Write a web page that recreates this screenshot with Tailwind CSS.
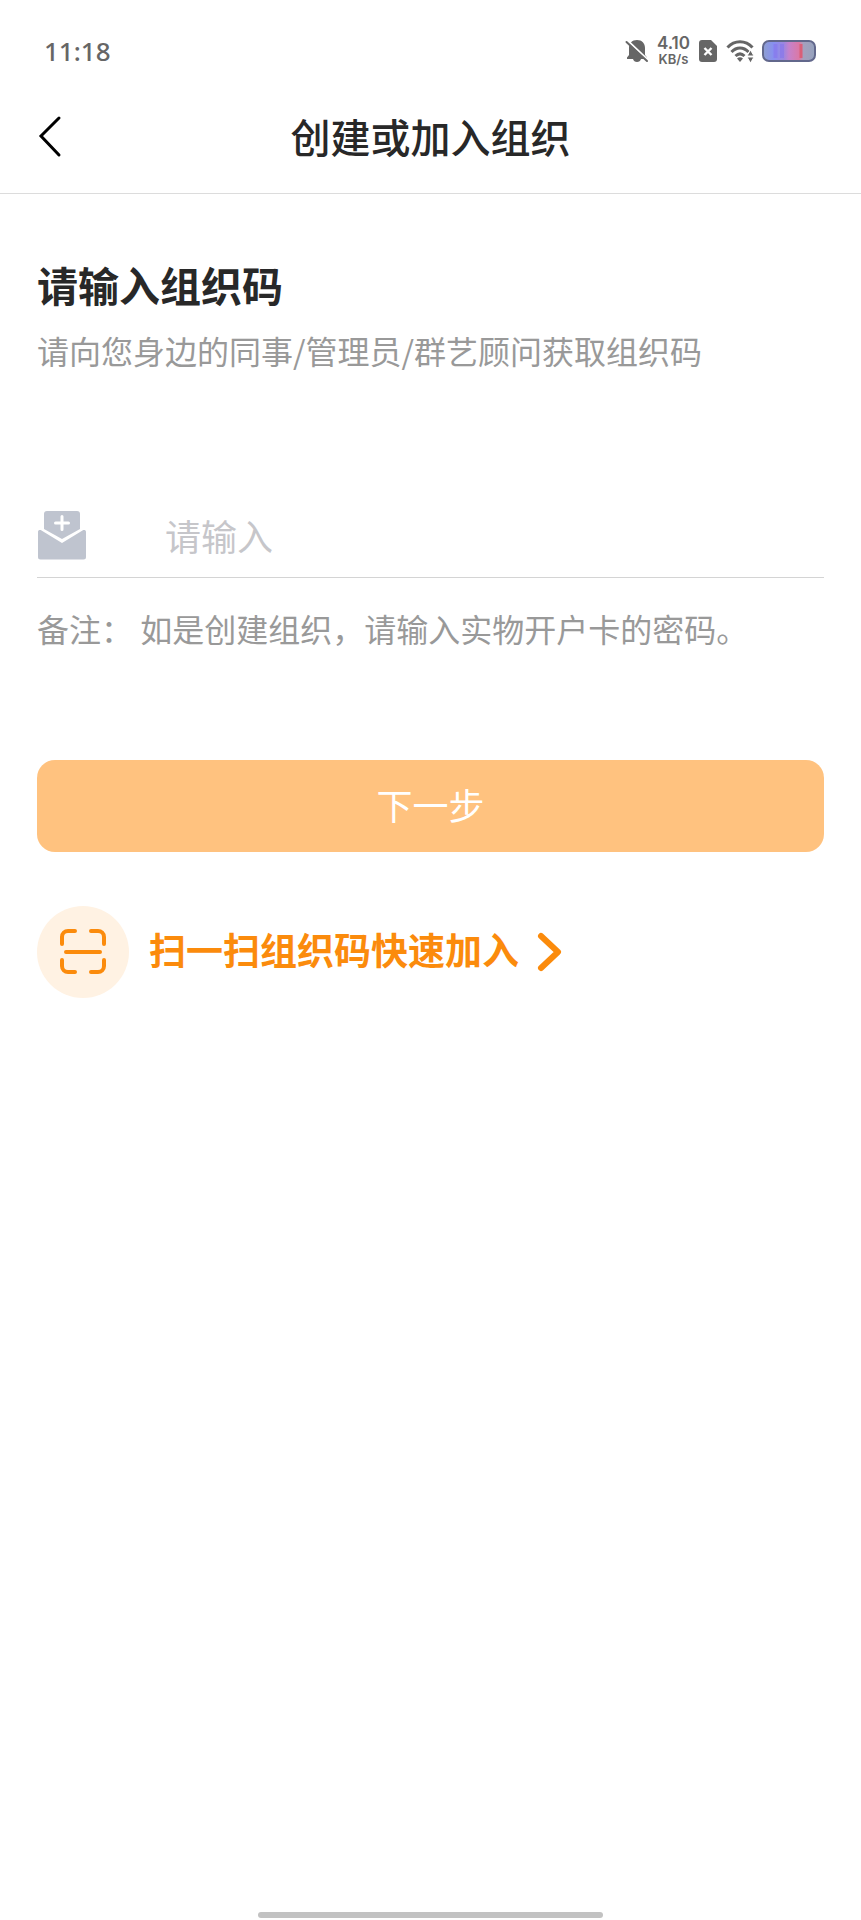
<!DOCTYPE html>
<html lang="zh-CN">

<head>
    <meta charset="UTF-8">
    <meta name="viewport" content="width=device-width, initial-scale=1.0">
    <title>创建或加入组织</title>
    <script src="https://cdn.jsdelivr.net/npm/@tailwindcss/browser@4"></script>
</head>

<body class="min-h-screen flex flex-col bg-white font-['Noto_Sans_CJK_SC',sans-serif] text-[#282828]">
    <!--Status bar-->
    <div class="h-[102px] pl-11 pr-[45px] flex items-center justify-between text-[#666]">
        <span class="text-[26px] font-medium font-['Noto_Sans',sans-serif]">11:18</span>
        <div class="flex items-center gap-2">
            <svg class="w-6 h-6" viewBox="0 0 24 24" fill="#666">
                <path d="M12 1c-5 0-8 3.500-8 8v7L2 18.500V20h6c.5 2 2 3 4 3s3.500-1 4-3h6v-1.500L20 16V9c0-4.500-3-8-8-8z" />
                <path d="M2.500 1.500l21 20" stroke="#fff" stroke-width="2" />
                <path d="M1.500 3l20.500 19" stroke="#666" stroke-width="2" stroke-linecap="round" />
            </svg>
            <div class="flex flex-col items-center font-semibold font-['Inter',sans-serif]">
                <span class="text-[17px] leading-4">4.10</span>
                <span class="text-[13px] leading-4">KB/s</span>
            </div>
            <svg class="w-5 h-6" viewBox="0 0 20 24">
                <path d="M4 1h9l6 6v13a3 3 0 0 1-3 3H4a3 3 0 0 1-3-3V4a3 3 0 0 1 3-3z" fill="#666" />
                <path d="M6.500 9l7 7M13.500 9l-7 7" stroke="#fff" stroke-width="2.400" />
            </svg>
            <svg class="w-7 h-6" viewBox="0 0 28 24" fill="none" stroke="#666" stroke-width="3">
                <path d="M1.500 8.500C8.500.8 19.500.8 26.500 8.500M5.500 13c5-5.300 12-5.300 17 0M9.500 17c2.800-2.600 6.200-2.600 9 0" />
                <path d="M11 19.500c2-1.600 4-1.600 6 0L14 23z" fill="#666" stroke="none" />
                <path d="M21 17l3.500-6 3.500 6zM21 18l3.500 6 3.500-6z" fill="#666" stroke="#fff" stroke-width="1" />
            </svg>
            <svg class="w-[54px] h-[22px]" viewBox="0 0 54 22">
                <defs>
                    <linearGradient id="battery">
                        <stop offset="0" stop-color="#8e9fd0" />
                        <stop offset=".2" stop-color="#8790f0" />
                        <stop offset=".4" stop-color="#9c86e0" />
                        <stop offset=".5" stop-color="#c582cc" />
                        <stop offset=".7" stop-color="#dc78a4" />
                        <stop offset=".77" stop-color="#a6a0bd" />
                        <stop offset="1" stop-color="#94a2bd" />
                    </linearGradient>
                </defs>
                <rect x="1" y="1" width="52" height="20" rx="6" fill="url(#battery)" stroke="#62688c" stroke-width="2" />
                <path d="M13.500 4v14M20 4v14" stroke="#8775ed" stroke-width="4" opacity=".6" />
                <path d="M39 4v14" stroke="#d95f78" stroke-width="3" />
            </svg>
        </div>
    </div>

    <!--Title bar-->
    <header class="h-[92px] pb-6 px-9 grid grid-cols-[48px_1fr_48px] items-center border-b border-[#dcdcdc]">
        <button type="button" aria-label="返回" class="h-12">
            <svg class="w-7 h-12" viewBox="0 0 28 48" fill="none" stroke="#000" stroke-width="3" stroke-linecap="round">
                <path d="M23 6L5 24l18 19" />
            </svg>
        </button>
        <h1 class="text-[40px] leading-[60px] font-medium text-center whitespace-nowrap">创建或加入组织</h1>
    </header>

    <main class="px-[37px] pt-15">
        <h2 class="text-[41px] leading-[60px] font-bold">请输入组织码</h2>
        <p class="mt-[14px] text-[32px] leading-[44px] text-[#999]">请向您身边的同事/管理员/群艺顾问获取组织码</p>

        <form>
            <div class="mt-[124px] h-[82px] pb-1 flex items-center border-b border-[#d4d4d4]">
                <label for="code" class="w-32" aria-label="组织码">
                    <svg class="w-[50px] h-[50px]" viewBox="0 0 50 50" fill="#bfc4cf">
                        <path d="M10 1h30a3 3 0 0 1 3 3v15L25 29 7 19V4a3 3 0 0 1 3-3z" />
                        <path d="M1 22c0-2 2-2.500 3.500-1.500L25 33l20.500-12.500C47 19.500 49 20 49 22v25a2.500 2.500 0 0 1-2.500 2.500h-43A2.500 2.500 0 0 1 1 47z" />
                        <path d="M25 6.500v13M18.500 13h13" stroke="#fff" stroke-width="3" stroke-linecap="round" />
                    </svg>
                </label>
                <input type="text" id="code" placeholder="请输入" class="flex-1 min-w-0 h-14 text-[36px] outline-none placeholder:text-[#c6c6ca]" />
            </div>
            <p class="mt-7 text-[32px] leading-[44px] text-[#999]">备注： 如是创建组织，请输入实物开户卡的密码。</p>

            <button type="submit" class="mt-[110px] pb-1 w-full h-[92px] rounded-[18px] bg-[#ffc27f] text-[36px] text-white">下一步</button>
        </form>

        <a href="#" class="mt-[54px] flex items-center text-[37px] font-bold text-[#fb8b0c]">
            <span class="w-[92px] h-[92px] rounded-full bg-[#fff2e3] flex items-center justify-center">
                <svg class="w-12 h-12" viewBox="0 0 48 48" fill="none" stroke="#fb8b0c" stroke-width="4" stroke-linecap="round">
                    <path d="M3 16V9a6 6 0 0 1 6-6h7M32 3h7a6 6 0 0 1 6 6v7M45 32v6a6 6 0 0 1-6 6h-7M16 44H9a6 6 0 0 1-6-6v-6M7 24h34" />
                </svg>
            </span>
            <span class="ml-5 pb-1">扫一扫组织码快速加入</span>
            <svg class="ml-4 w-7 h-11" viewBox="0 0 28 44" fill="none" stroke="#fb8b0c" stroke-width="6" stroke-linecap="round" stroke-linejoin="round">
                <path d="M6 6l17 16L6 38" />
            </svg>
        </a>
    </main>

    <!--Home indicator-->
    <div class="mt-auto mb-[2px] mx-auto w-2/5 h-[6px] rounded-full bg-[#c2c2c2]"></div>
</body>

</html>
